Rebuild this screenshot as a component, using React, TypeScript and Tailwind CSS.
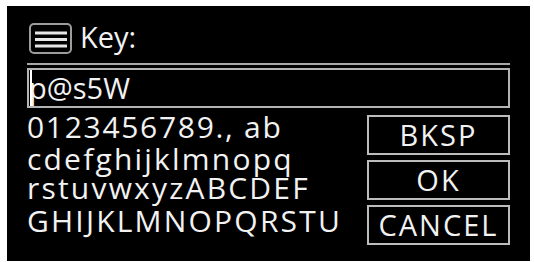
import React from "react";

const rows = [
  { text: "0123456789., ab", cls: "-mt-[2px] tracking-[1.7px]" },
  { text: "cdefghijklmnopq", cls: "mt-[4px] tracking-[2.2px]" },
  { text: "rstuvwxyzABCDEF", cls: "mt-[1px] tracking-[2.2px]" },
  { text: "GHIJKLMNOPQRSTU", cls: "mt-[5px] tracking-[2.2px]" },
];
const buttons = ["BKSP", "OK", "CANCEL"];

function MenuIcon() {
  return (
    <svg width="43" height="31" viewBox="0 0 43 31" className="ml-[2px] shrink-0">
      <rect x="1" y="1" width="41" height="29" rx="4" fill="none" stroke="#9c9c9c" strokeWidth="2" />
      <line x1="6" y1="10" x2="38" y2="10" stroke="#e6e6e6" strokeWidth="3" />
      <line x1="6" y1="16.5" x2="38" y2="16.5" stroke="#e6e6e6" strokeWidth="3" />
      <line x1="6" y1="23" x2="38" y2="23" stroke="#e6e6e6" strokeWidth="3" />
    </svg>
  );
}

export default function App() {
  return (
    <div
      className="w-[534px] h-[262px] bg-white pl-[7px] pt-[6px] pr-[4px] pb-[1px]"
      style={{ fontFamily: '"Open Sans", "Noto Sans", sans-serif' }}
    >
      <div className="w-full h-full bg-black px-[20px] pt-[17px] flex flex-col text-[#f2f2f2] text-[29px]">
        {/* title */}
        <div className="h-[31px] flex items-start">
          <MenuIcon />
          <span className="ml-[8px] leading-[27px]">Key:</span>
        </div>
        <div className="mt-[9px] h-[2px] bg-[#a8a8a8]" />

        {/* entry field */}
        <div className="mt-[3px] h-[40px] border-2 border-[#b4b4b4] relative">
          <span className="absolute left-[1px] top-0 bottom-0 w-[2px] bg-white" />
          <div className="leading-[36px]">p@s5W</div>
        </div>

        {/* character picker + actions */}
        <div className="mt-[7px] flex">
          <div className="flex-1 flex flex-col text-[30px]">
            {rows.map((r) => (
              <div key={r.text} className={`${r.cls} leading-[28px] whitespace-pre`}>
                {r.text}
              </div>
            ))}
          </div>
          <div className="w-[143px] flex flex-col gap-[5px]">
            {buttons.map((b) => (
              <div
                key={b}
                className="h-[40px] border-2 border-[#bcbcbc] flex items-center justify-center leading-[36px] tracking-[2px]"
              >
                {b}
              </div>
            ))}
          </div>
        </div>
      </div>
    </div>
  );
}
